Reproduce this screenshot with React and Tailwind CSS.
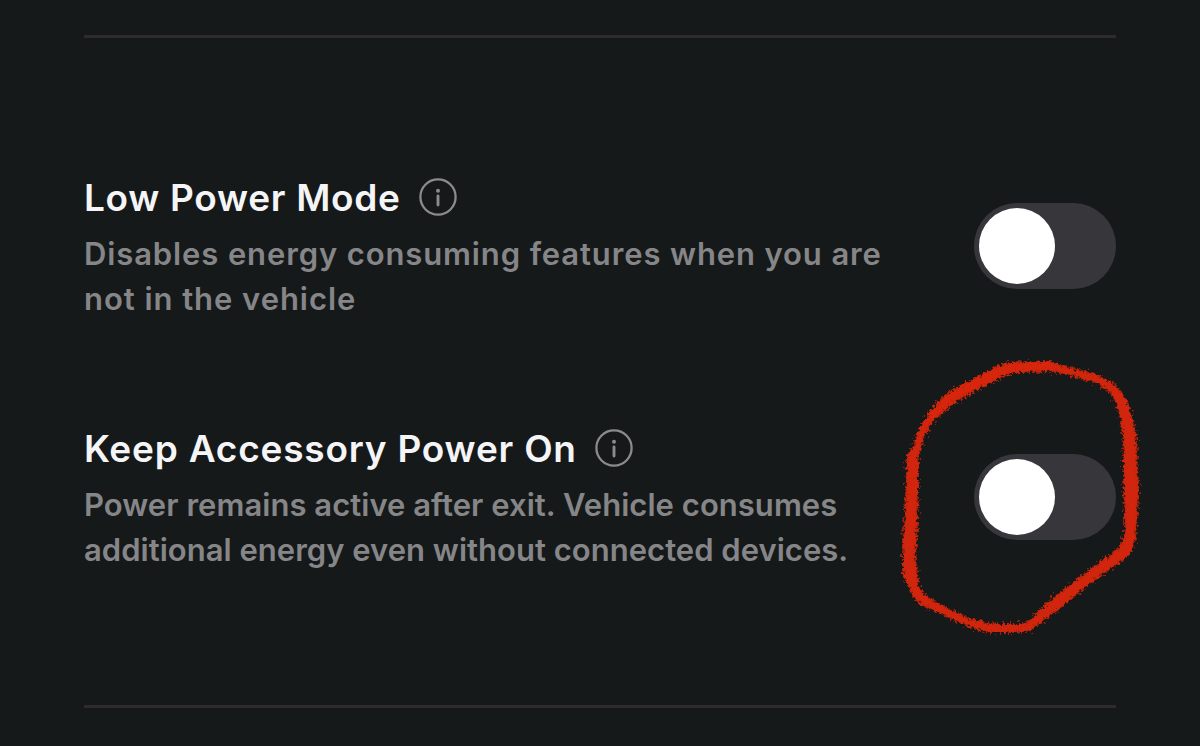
const SETTINGS = [
  {
    id: 'low-power',
    title: 'Low Power Mode',
    titleClass: 'tracking-[0.7px]',
    lines: [
      { text: 'Disables energy consuming features when you are', className: 'tracking-[0.88px]' },
      { text: 'not in the vehicle', className: 'tracking-[0.95px]' },
    ],
  },
  {
    id: 'accessory-power',
    title: 'Keep Accessory Power On',
    titleClass: 'tracking-[0.79px]',
    circled: true,
    lines: [
      { text: 'Power remains active after exit. Vehicle consumes', className: 'tracking-[0.04px]' },
      { text: 'additional energy even without connected devices.', className: 'tracking-[0.02px]' },
    ],
  },
];

function InfoIcon() {
  return (
    <svg className="w-[38px] h-[38px] shrink-0" viewBox="0 0 38 38" fill="none">
      <circle cx="19" cy="19" r="17.6" stroke="#8b8a8c" strokeWidth="2.3" />
      <circle cx="19" cy="12.7" r="2" fill="#8b8a8c" />
      <path d="M19 18v9" stroke="#8b8a8c" strokeWidth="2.9" strokeLinecap="round" />
    </svg>
  );
}

function Toggle() {
  return (
    <button
      type="button"
      role="switch"
      aria-checked="false"
      className="flex w-[142px] h-[86px] shrink-0 items-center rounded-full bg-[#37363a] pl-[5px]"
    >
      <span className="size-[76px] rounded-full bg-white" />
    </button>
  );
}

const LOOP_PATH =
  'M906 495L907 457L913 448L918 432Q922 423 930 413Q940 400 953 390L997 367Q1008 362 1023 362L1050 362L1063 366L1090 373Q1103 377 1110 382Q1119 388 1123 395Q1128 403 1130 412L1136 435L1137 462L1138 493L1137 517L1135 540Q1133 550 1127 557L1090 583L1057 610L1033 628Q1028 632 1023 632L990 632L973 628L950 618L923 605Q915 600 912 593L903 575L903 540L905 517Z ' +
  'M918 495L918 458L922 442L928 428Q934 419 943 412Q954 402 967 395L1003 376Q1012 372 1023 372L1050 371L1070 375L1097 383Q1105 387 1110 393Q1116 400 1118 408L1123 432L1124 462L1124 495L1125 510L1125 533Q1123 544 1117 550L1090 570L1057 595L1030 620Q1027 624 1023 624L990 624L973 620L950 610L927 597Q920 592 918 583L915 557L917 523Z';

// Crayon loop: a solid core with a looser, fainter grain around it
function MarkerCircle() {
  return (
    <svg
      className="absolute left-[890px] top-[345px] w-[260px] h-[300px] pointer-events-none"
      viewBox="890 345 260 300"
    >
      <filter id="core" x="-5%" y="-5%" width="110%" height="110%">
        <feTurbulence type="fractalNoise" baseFrequency="0.3" numOctaves="2" seed="4" />
        <feDisplacementMap in="SourceGraphic" scale="8" xChannelSelector="R" yChannelSelector="G" />
        <feGaussianBlur stdDeviation="0.5" />
      </filter>
      <filter id="grain" x="-5%" y="-5%" width="110%" height="110%">
        <feTurbulence type="fractalNoise" baseFrequency="0.4" numOctaves="2" seed="9" />
        <feDisplacementMap in="SourceGraphic" scale="15" xChannelSelector="R" yChannelSelector="G" />
        <feGaussianBlur stdDeviation="0.5" />
      </filter>
      <g fill="#dc2707" fillRule="evenodd">
        <path filter="url(#grain)" opacity="0.65" d={LOOP_PATH} />
        <path filter="url(#core)" opacity="0.85" d={LOOP_PATH} />
      </g>
      {/* heavier pressure at the top of the stroke */}
      <path
        filter="url(#grain)"
        d="M930 418Q940 402 958 392L1003 370Q1020 365 1052 365"
        fill="none"
        stroke="#dc2707"
        strokeWidth="8"
        opacity="0.7"
      />
    </svg>
  );
}

function SettingRow({ setting }) {
  return (
    <div className="flex h-[143px] items-center justify-between">
      <div className="pt-[1px]">
        <div className="flex items-center gap-[18px]">
          <h2 className={`pt-[1px] text-[37px] leading-[49px] font-semibold text-[#f5f5f7] whitespace-nowrap ${setting.titleClass}`}>
            {setting.title}
          </h2>
          <InfoIcon />
        </div>
        <p className="mt-[9px] text-[31px] leading-[45px] font-[570] text-[#868688]">
          {setting.lines.map((line) => (
            <span key={line.text} className={`block whitespace-nowrap ${line.className}`}>
              {line.text}
            </span>
          ))}
        </p>
      </div>
      <Toggle />
    </div>
  );
}

export default function App() {
  return (
    <div className="relative h-[746px] w-[1200px] overflow-hidden bg-[#15191a] px-[84px] pt-[35px] font-['Inter',sans-serif]">
      <div className="h-[3px] bg-[#2d2b2d]" />
      <div className="flex flex-col gap-[108px] pt-[136px] pb-[137px]">
        {SETTINGS.map((setting) => (
          <SettingRow key={setting.id} setting={setting} />
        ))}
      </div>
      <div className="h-[3px] bg-[#2d2b2d]" />
      {SETTINGS.some((setting) => setting.circled) && <MarkerCircle />}
    </div>
  );
}
